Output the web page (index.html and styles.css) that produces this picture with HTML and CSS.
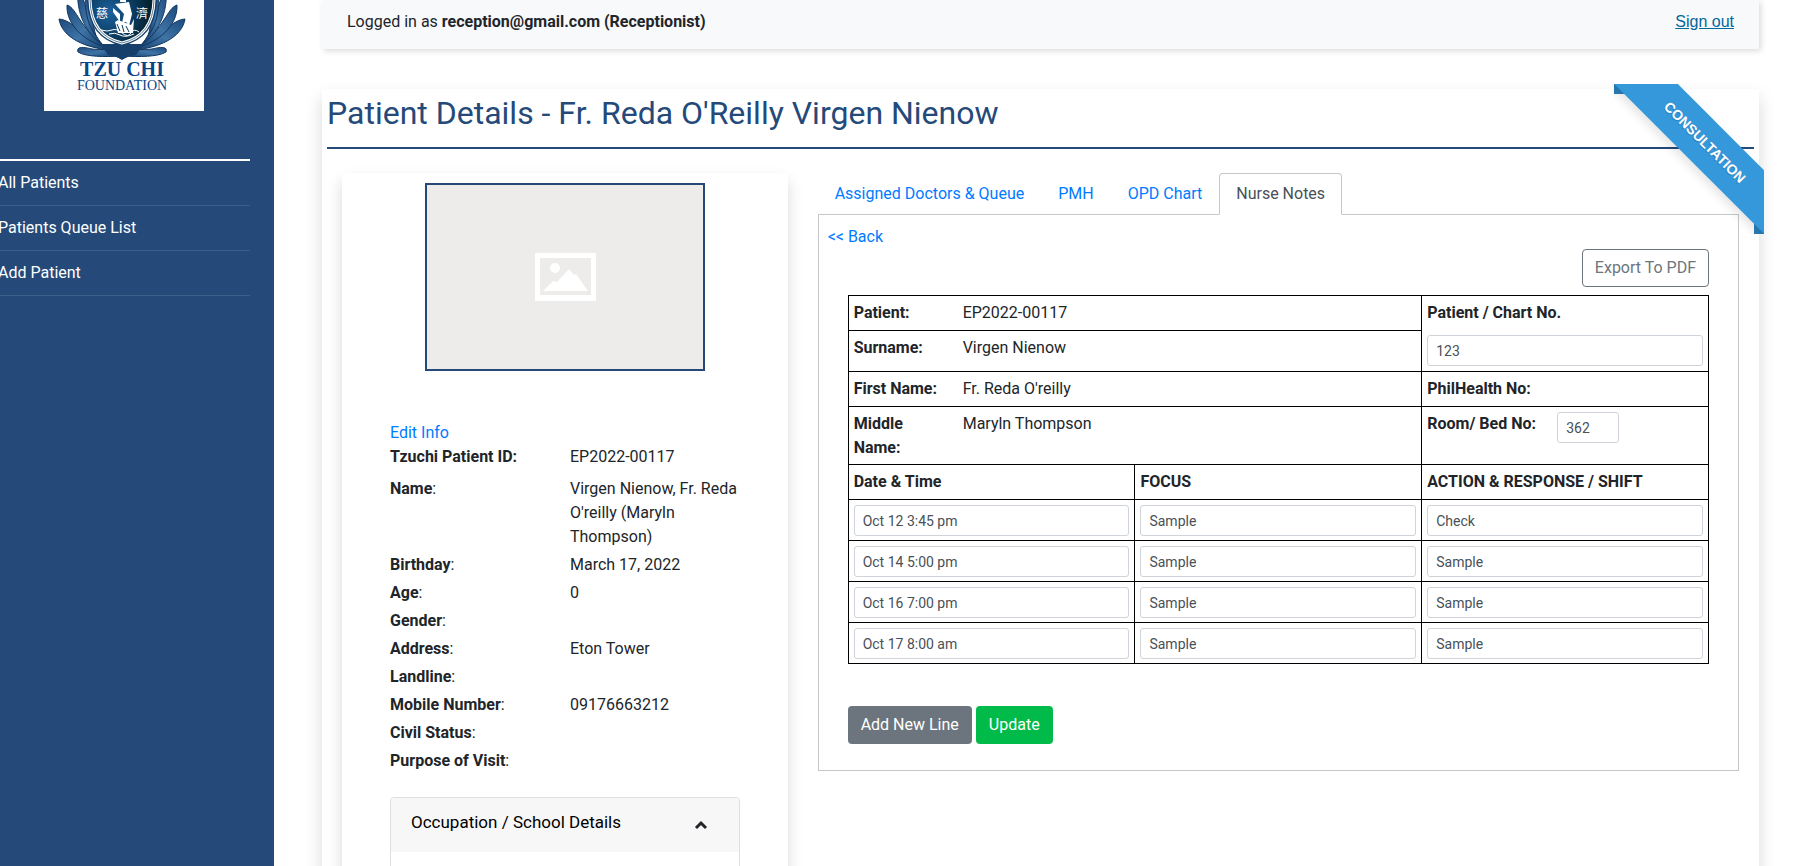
FILE: index.html
```
<!DOCTYPE html>
<html lang="en">
<head>
  <meta charset="UTF-8" />
  <meta name="viewport" content="width=device-width, initial-scale=1.0"/>
  <title>Patient Details</title>
  <link rel="stylesheet" href="styles.css">
</head>
<body>

  <div class="wrapper">

    <!-- Sidebar -->
    <nav class="sidebar">
      <div class="logo">
        <svg viewBox="-78 -49 160 160" role="img" aria-label="Tzu Chi Foundation">
          <defs>
            <radialGradient id="shieldFill" cx="0.3" cy="0.55" r="0.65">
              <stop offset="0" stop-color="#1c62a0"/>
              <stop offset="0.6" stop-color="#0b3a5c"/>
              <stop offset="1" stop-color="#02222f"/>
            </radialGradient>
            <linearGradient id="leafFill" x1="0" y1="0" x2="1" y2="1">
              <stop offset="0" stop-color="#1d4a7d"/>
              <stop offset="0.5" stop-color="#3f74a6"/>
              <stop offset="1" stop-color="#133d6b"/>
            </linearGradient>
            <g id="leaves" fill="url(#leafFill)" stroke="#12375f" stroke-width="1">
              <path d="M-3 56 C-16 57 -36 57 -44 52 C-46 46 -38 47 -30 49 C-20 50 -10 49 -3 52 Z"/>
              <path d="M-12 50 C-36 48 -60 38 -63 19 C-50 20 -38 36 -12 50 Z"/>
              <path d="M-16 47 C-34 43 -56 27 -55 5 C-45 8 -43 28 -16 47 Z"/>
              <path d="M-20 44 C-36 34 -46 12 -44 -9 C-35 -4 -38 22 -20 44 Z"/>
              <path d="M-26 36 C-38 20 -40 -4 -30 -24 C-24 -12 -34 10 -26 36 Z"/>
            </g>
          </defs>
          <use href="#leaves"/>
          <use href="#leaves" transform="scale(-1 1)"/>
          <path d="M-22 44 L22 44 L14 55 Q6 56 0 60 Q-6 56 -14 55 Z" fill="#163f6c"/>
          <path d="M-34 -22 Q0 -34 34 -22 L35 0 Q34 38 0 46 Q-34 38 -35 0 Z" fill="#163f6c"/>
          <path d="M-31 -20 Q0 -31 31 -20 L32 0 Q31 36 0 43 Q-31 36 -32 0 Z" fill="url(#shieldFill)" stroke="#fff" stroke-width="3"/>
          <path d="M-31 -20 Q0 -31 31 -20 L32 0 Q31 36 0 43 Q-31 36 -32 0 Z" fill="none" stroke="#5d7d96" stroke-width="1"/>
          <g fill="#fff">
            <path d="M-1 -10 L4 -6 L4 2 L-2 2 Z"/>
            <path d="M-7 4 L7 2 L10 14 L7 26 L4 22 L0 23 L2 14 Z"/>
            <path d="M-9 8 L-2 14 L-2 22 L-9 12 Z"/>
            <path d="M-7 22 L-4 20 L9 25 L12 19 L11 33 L-4 33 Z"/>
          </g>
          <path d="M-21 30 Q-14 32 -10 30 T0 33 T9 33 T17 32 M-13 34 Q-7 32 -2 35 T12 34" fill="none" stroke="#fff" stroke-width="1"/>
          <path d="M-5 24 L-2 31 M0 25 L2 32 M4 26 L7 32" stroke="#0b3a5c" stroke-width="1"/>
          <text class="logo-han" x="-20" y="18">慈</text>
          <text class="logo-han" x="20" y="18">濟</text>
          <text class="logo-name" x="0" y="76">TZU CHI</text>
          <text class="logo-sub" x="0" y="90">FOUNDATION</text>
        </svg>
      </div>
      <ul class="menu">
        <li><a href="#">All Patients</a></li>
        <li><a href="#">Patients Queue List</a></li>
        <li><a href="#">Add Patient</a></li>
      </ul>
    </nav>

    <main class="content">

      <!-- Top bar -->
      <header class="topbar">
        <span>Logged in as <b>reception@gmail.com (Receptionist)</b></span>
        <a class="sign-out" href="#">Sign out</a>
      </header>

      <section class="panel">
        <div class="ribbon"><span>Consultation</span></div>
        <h1>Patient Details - Fr. Reda O'Reilly Virgen Nienow</h1>

        <div class="row">

          <!-- Patient info -->
          <div class="col-side">
            <div class="card">
              <div class="photo">
                <svg width="62" height="50" viewBox="0 0 62 50" aria-hidden="true">
                  <path fill="#fff" fill-rule="evenodd" d="M1 1 H62 V49 H1 Z M6 6 V43 H57 V6 Z"/>
                  <circle cx="21" cy="16" r="5" fill="#fff"/>
                  <path fill="#fff" d="M9 39 L19 29 L23 30 L35 17 L40 23 L42 22 L54 39 Z"/>
                </svg>
              </div>
              <div class="info">
                <a href="#">Edit Info</a>
                <dl>
                  <div class="info-row first"><dt><b>Tzuchi Patient ID:</b></dt><dd>EP2022-00117</dd></div>
                  <div class="info-row"><dt><b>Name</b>:</dt><dd>Virgen Nienow, Fr. Reda O'reilly (Maryln Thompson)</dd></div>
                  <div class="info-row"><dt><b>Birthday</b>:</dt><dd>March 17, 2022</dd></div>
                  <div class="info-row"><dt><b>Age</b>:</dt><dd>0</dd></div>
                  <div class="info-row"><dt><b>Gender</b>:</dt><dd></dd></div>
                  <div class="info-row"><dt><b>Address</b>:</dt><dd>Eton Tower</dd></div>
                  <div class="info-row"><dt><b>Landline</b>:</dt><dd></dd></div>
                  <div class="info-row"><dt><b>Mobile Number</b>:</dt><dd>09176663212</dd></div>
                  <div class="info-row"><dt><b>Civil Status</b>:</dt><dd></dd></div>
                  <div class="info-row"><dt><b>Purpose of Visit</b>:</dt><dd></dd></div>
                </dl>
                <div class="accordion">
                  <button type="button" class="accordion-header" aria-expanded="true">
                    Occupation / School Details
                    <svg width="14" height="16" viewBox="0 0 14 16" aria-hidden="true">
                      <path d="M2 14 L7 9 L12 14" fill="none" stroke="#212529" stroke-width="3"/>
                    </svg>
                  </button>
                  <div class="accordion-body"></div>
                </div>
              </div>
            </div>
          </div>

          <!-- Nurse notes -->
          <div class="col-main">
            <nav class="tabs">
              <a href="#">Assigned Doctors &amp; Queue</a>
              <a href="#">PMH</a>
              <a href="#">OPD Chart</a>
              <a href="#" class="active">Nurse Notes</a>
            </nav>
            <div class="tab-pane">
              <a href="#">&lt;&lt; Back</a>
              <form class="notes">
                <div class="export">
                  <button type="button" class="btn btn-outline">Export To PDF</button>
                </div>
                <table>
                  <tbody>
                    <tr>
                      <td colspan="2"><div class="field"><b>Patient:</b><span>EP2022-00117</span></div></td>
                      <td rowspan="2">
                        <label class="chart-label" for="chartNo">Patient / Chart No.</label>
                        <input id="chartNo" type="text" value="123" />
                      </td>
                    </tr>
                    <tr class="input-row">
                      <td colspan="2"><div class="field"><b>Surname:</b><span>Virgen Nienow</span></div></td>
                    </tr>
                    <tr>
                      <td colspan="2"><div class="field"><b>First Name:</b><span>Fr. Reda O'reilly</span></div></td>
                      <td><b>PhilHealth No:</b></td>
                    </tr>
                    <tr>
                      <td colspan="2"><div class="field"><b>Middle Name:</b><span>Maryln Thompson</span></div></td>
                      <td>
                        <div class="room">
                          <label for="roomNo">Room/ Bed No:</label>
                          <input id="roomNo" type="text" value="362" />
                        </div>
                      </td>
                    </tr>
                    <tr>
                      <th>Date &amp; Time</th>
                      <th>FOCUS</th>
                      <th>ACTION &amp; RESPONSE / SHIFT</th>
                    </tr>
                    <tr class="input-row">
                      <td><input type="text" aria-label="Date and time" value="Oct 12 3:45 pm" /></td>
                      <td><input type="text" aria-label="Focus" value="Sample" /></td>
                      <td><input type="text" aria-label="Action" value="Check" /></td>
                    </tr>
                    <tr class="input-row">
                      <td><input type="text" aria-label="Date and time" value="Oct 14 5:00 pm" /></td>
                      <td><input type="text" aria-label="Focus" value="Sample" /></td>
                      <td><input type="text" aria-label="Action" value="Sample" /></td>
                    </tr>
                    <tr class="input-row">
                      <td><input type="text" aria-label="Date and time" value="Oct 16 7:00 pm" /></td>
                      <td><input type="text" aria-label="Focus" value="Sample" /></td>
                      <td><input type="text" aria-label="Action" value="Sample" /></td>
                    </tr>
                    <tr class="input-row">
                      <td><input type="text" aria-label="Date and time" value="Oct 17 8:00 am" /></td>
                      <td><input type="text" aria-label="Focus" value="Sample" /></td>
                      <td><input type="text" aria-label="Action" value="Sample" /></td>
                    </tr>
                  </tbody>
                </table>
                <div class="actions">
                  <button type="button" class="btn btn-gray">Add New Line</button>
                  <button type="submit" class="btn btn-green">Update</button>
                </div>
              </form>
            </div>
          </div>

        </div>
      </section>
    </main>
  </div>

</body>
</html>
```

FILE: styles.css
```
* {
  box-sizing: border-box;
}
body {
  font-family: Roboto, sans-serif;
  font-size: 16px;
  line-height: 24px;
  color: #212529;
  background: #fff;
  margin: 0;
}
a {
  color: #007bff;
  text-decoration: none;
}
b, th {
  font-weight: bold;
}
.wrapper {
  display: flex;
  height: 100vh;
  overflow: hidden;
}

/* Sidebar */
.sidebar {
  flex: 0 0 274px;
  background: #254a79;
}
.logo {
  width: 160px;
  height: 160px;
  margin: -49px 0 48px 44px;
  background: #fff;
}
.logo svg {
  display: block;
}
.logo text {
  text-anchor: middle;
}
.logo-han {
  font-family: "Noto Sans CJK TC", sans-serif;
  font-size: 12px;
  fill: #fff;
}
.logo-name {
  font-family: "Liberation Serif", serif;
  font-size: 20px;
  font-weight: bold;
  fill: #0b4485;
}
.logo-sub {
  font-family: "Liberation Serif", serif;
  font-size: 14px;
  fill: #0b4485;
}
.menu {
  list-style: none;
  margin: 0 24px 0 -2px;
  padding: 0;
  border-top: 2px solid #fff;
}
.menu li {
  border-bottom: 1px solid #3e5f89;
}
.menu a {
  display: block;
  padding: 10px 0;
  color: #fff;
}

/* Content */
.content {
  flex: 1;
  min-width: 0;
  padding: 0 38px 0 48px;
}
.topbar {
  display: flex;
  justify-content: space-between;
  padding: 10px 25px 15px;
  background: #f8f9fb;
  box-shadow: 2px 2px 6px rgba(0, 0, 0, 0.15);
}
.sign-out {
  font-family: "Liberation Sans", sans-serif;
  color: #00689d;
  text-decoration: underline;
}
.panel {
  position: relative;
  min-height: 100vh;
  margin-top: 40px;
  padding: 5px;
  box-shadow: 0 8px 16px rgba(0, 0, 0, 0.15);
}
h1 {
  margin: 0 0 24px;
  padding-bottom: 15px;
  border-bottom: 2px solid #254a79;
  font-size: 32px;
  line-height: 38px;
  font-weight: normal;
  color: #254a79;
}
.row {
  display: flex;
}
.col-side {
  flex: 0 0 33.3333%;
  padding: 0 15px;
}
.col-main {
  flex: 1;
  min-width: 0;
  padding: 0 15px;
}

/* Ribbon in the corner of the panel */
.ribbon {
  position: absolute;
  top: -5px;
  right: -5px;
  width: 150px;
  height: 150px;
  overflow: hidden;
}
.ribbon::before,
.ribbon::after {
  content: "";
  position: absolute;
  border: 5px solid #2980b9;
}
.ribbon::before {
  top: 0;
  left: 0;
}
.ribbon::after {
  bottom: 0;
  right: 0;
}
.ribbon span {
  position: absolute;
  z-index: 1;
  top: 36px;
  left: -22px;
  width: 225px;
  padding: 15px 0;
  background: #3498db;
  box-shadow: 0 5px 10px rgba(0, 0, 0, 0.1);
  color: #fff;
  font-family: "Liberation Sans", sans-serif;
  font-size: 14px;
  line-height: 15px;
  font-weight: bold;
  text-shadow: 0 1px 1px rgba(0, 0, 0, 0.2);
  text-transform: uppercase;
  text-align: center;
  transform: rotate(45deg);
}

/* Patient info card */
.card {
  min-height: 100vh;
  padding: 10px 48px;
  border-radius: 4px;
  box-shadow: 0 8px 16px rgba(0, 0, 0, 0.15);
}
.photo {
  display: flex;
  align-items: center;
  justify-content: center;
  width: 80%;
  height: 188px;
  margin: 0 auto 50px;
  border: 2px solid #254a79;
  background: #edecea;
}
dl {
  margin: 0 0 22px;
}
.info-row {
  display: flex;
  padding: 2px 0;
}
.info-row.first {
  padding: 0 0 6px;
}
dt {
  flex: 0 0 180px;
}
dd {
  margin: 0;
}
.accordion {
  border: 1px solid #dfdfdf;
  border-radius: 4px;
}
.accordion-header {
  display: flex;
  align-items: center;
  justify-content: space-between;
  width: 100%;
  padding: 12px 31px 18px 20px;
  border: none;
  border-radius: 4px 4px 0 0;
  background: #f7f7f7;
  font: inherit;
  font-size: 17px;
  color: #000;
}
.accordion-body {
  height: 96px;
}

/* Tabs */
.tabs {
  display: flex;
}
.tabs a {
  padding: 8px 16px;
  border: 1px solid transparent;
  border-radius: 4px 4px 0 0;
  margin-bottom: -1px;
}
.tabs a.active {
  position: relative;
  border-color: #c4c8cc #c4c8cc #fff;
  background: #fff;
  color: #495057;
}
.tab-pane {
  padding: 10px 9px 26px;
  border: 1px solid #c4c8cc;
}
.notes {
  padding: 0 20px;
}
.export {
  display: flex;
  justify-content: flex-end;
  margin-bottom: 8px;
}
table {
  width: 100%;
  table-layout: fixed;
  border-collapse: collapse;
}
th, td {
  height: 35px;
  padding: 5px 5px 4px;
  border: 1px solid #000;
  text-align: left;
  vertical-align: top;
}
.input-row td {
  height: 41px;
}
input {
  display: block;
  width: 100%;
  height: 31px;
  padding: 4px 8px;
  border: 1px solid #ced4da;
  border-radius: 3px;
  font-family: inherit;
  font-size: 14px;
  color: #495057;
}
label {
  font-weight: bold;
}
.chart-label {
  display: block;
  margin-bottom: 10px;
}
.field {
  display: flex;
  gap: 15px;
}
.field b {
  flex: 0 0 94px;
}
.room {
  display: flex;
}
.room label {
  flex: 0 0 130px;
}
.room input {
  width: 62px;
}
.actions {
  display: flex;
  gap: 4px;
  margin-top: 42px;
}
.btn {
  padding: 6px 12px;
  border: 1px solid transparent;
  border-radius: 4px;
  font: inherit;
  color: #fff;
  cursor: pointer;
}
.btn-outline {
  border-color: #6c757d;
  background: #fff;
  color: #6c757d;
}
.btn-gray {
  background: #6c757d;
}
.btn-green {
  background: #00ba4a;
}
```
